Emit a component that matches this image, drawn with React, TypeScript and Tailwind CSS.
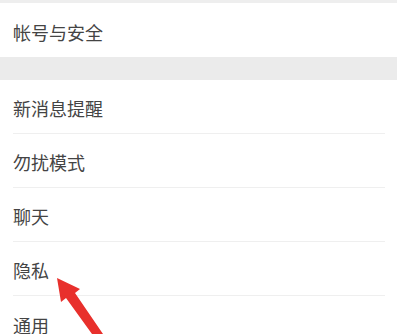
import React from 'react';

const groupTwo = ['新消息提醒', '勿扰模式', '聊天', '隐私', '通用'];

function Row({ label, divider }: { label: string; divider: boolean }) {
  return (
    <div className="bg-white pl-[13px]">
      <div className={`h-[54px] flex items-center pt-[4px] mr-[12px] ${divider ? 'border-b border-[#efefef]' : ''}`}>
        <span className="text-[18px] text-[#444444]">{label}</span>
      </div>
    </div>
  );
}

export default function App() {
  return (
    <div
      className="relative w-[397px] h-[334px] overflow-hidden bg-white"
      style={{ fontFamily: '"Noto Sans CJK SC", "Noto Sans", sans-serif' }}
    >
      <div className="h-[3px] bg-[#eeeeee]" />
      <Row label="帐号与安全" divider={false} />
      <div className="h-[23px] bg-[#ebebeb]" />
      {groupTwo.map((label, i) => (
        <Row key={label} label={label} divider={i < groupTwo.length - 1} />
      ))}

      {/* red annotation arrow */}
      <svg className="absolute left-0 top-0" width="397" height="334" viewBox="0 0 397 334">
        <polygon points="57,278 80,289 75,293 103,334 92,334 66,298 61,302" fill="#e8302c" />
      </svg>
    </div>
  );
}
